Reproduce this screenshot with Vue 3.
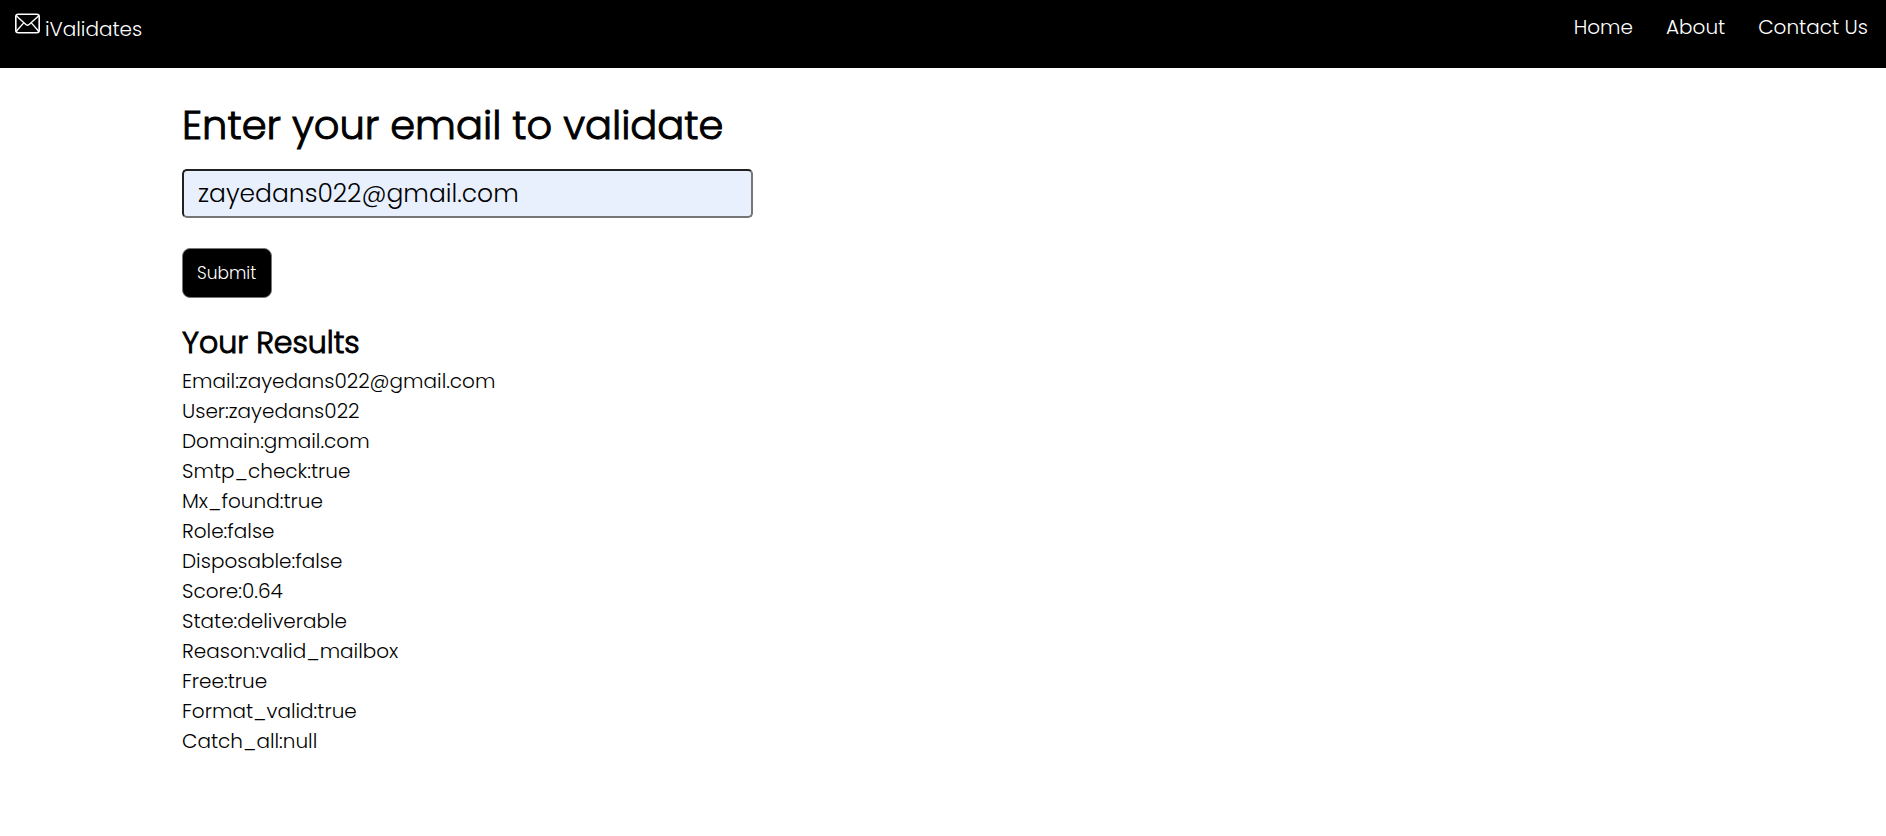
<script setup>
import { ref } from 'vue'

const email = ref('zayedans022@gmail.com')

const links = ['Home', 'About', 'Contact Us']

const results = [
  ['Email', 'zayedans022@gmail.com'],
  ['User', 'zayedans022'],
  ['Domain', 'gmail.com'],
  ['Smtp_check', 'true'],
  ['Mx_found', 'true'],
  ['Role', 'false'],
  ['Disposable', 'false'],
  ['Score', '0.64'],
  ['State', 'deliverable'],
  ['Reason', 'valid_mailbox'],
  ['Free', 'true'],
  ['Format_valid', 'true'],
  ['Catch_all', 'null'],
]
</script>

<template>
  <div class="page">
    <header class="navbar">
      <a class="brand" href="#">
        <svg class="brand-icon" viewBox="0 0 25 20" fill="none" stroke="currentColor" aria-hidden="true">
          <rect x="0.8" y="0.8" width="23.4" height="18.4" rx="2.5" stroke-width="1.6" />
          <path d="M1.5 2.5 10.3 10.6Q12.5 12.8 14.7 10.6L23.5 2.5M1.5 17.5 8.5 9.6M23.5 17.5 16.5 9.6" stroke-width="1.4" />
        </svg>
        <span class="brand-name">iValidates</span>
      </a>
      <nav class="links">
        <a v-for="link in links" :key="link" href="#">{{ link }}</a>
      </nav>
    </header>

    <main class="content">
      <form @submit.prevent>
        <h1><label for="email">Enter your email to validate</label></h1>
        <input id="email" v-model="email" class="email" type="text" />
        <button class="submit" type="submit">Submit</button>
      </form>
      <section>
        <h2>Your Results</h2>
        <div v-for="[key, value] in results" :key="key" class="result">{{ key }}:{{ value }}</div>
      </section>
    </main>
  </div>
</template>

<style>
body {
  margin: 0;
  background: #fff;
}
</style>

<style scoped>
.page {
  font-family: Poppins, Inter, 'Liberation Sans', sans-serif;
  font-weight: 300;
  font-size: 20px;
  line-height: 30px;
  color: #000;
}

.navbar {
  display: flex;
  justify-content: space-between;
  align-items: flex-start;
  box-sizing: border-box;
  min-height: 68px;
  padding: 12px 18px 12px 15px;
  background: #000;
  color: #fff;
}

.brand {
  display: flex;
  align-items: flex-start;
  gap: 5px;
  color: inherit;
  text-decoration: none;
}

.brand-icon {
  width: 25px;
  height: 23px;
}

.brand-name {
  padding-top: 2px;
}

.links {
  display: flex;
  gap: 33px;
}

.links a {
  color: inherit;
  text-decoration: none;
}

.content {
  padding: 33px 182px;
}

h1,
h2 {
  font-weight: 300;
  -webkit-text-stroke: 1px currentColor;
}

h1 {
  margin: 0 0 20px;
  font-size: 40px;
  line-height: 48px;
}

.email {
  display: block;
  box-sizing: border-box;
  width: 571px;
  max-width: 100%;
  height: 49px;
  padding: 0 14px;
  border: 2px inset #767676;
  border-radius: 5px;
  background: #e8f0fe;
  color: #000;
  font: inherit;
  font-size: 25px;
}

.submit {
  display: block;
  height: 50px;
  margin: 30px 0 27px;
  padding: 0 15px 0 14px;
  border: 1px solid #767676;
  border-radius: 8px;
  background: #000;
  color: #fff;
  font: inherit;
  font-size: 17px;
}

h2 {
  margin: 0 0 5px;
  font-size: 30px;
  line-height: 36px;
}
</style>
